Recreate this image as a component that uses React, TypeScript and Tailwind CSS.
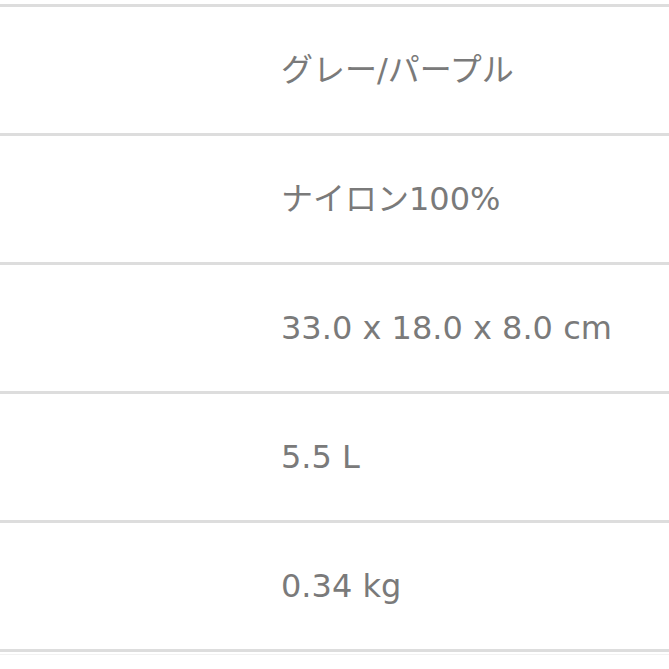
import React from 'react'

const specs = [
  { label: 'カラー', value: 'グレー/パープル' },
  { label: '素材', value: 'ナイロン100%' },
  { label: 'サイズ', value: '33.0 x 18.0 x 8.0 cm' },
  { label: '容量', value: '5.5 L' },
  { label: '重量', value: '0.34 kg' }
]

export default function App () {
  return (
    <div className="w-[669px] h-[669px] bg-white overflow-hidden pt-[4px]">
      <div className="flex flex-col">
        {specs.map((s) => (
          <div key={s.label} className="h-[129px] border-t-[3px] border-[#dddddd] flex items-center">
            <div className="w-[281px] shrink-0" aria-label={s.label} />
            <div
              className="text-[32px] leading-none text-[#7a7a7a]"
              style={{ fontFamily: '"DejaVu Sans", "Noto Sans CJK JP", sans-serif' }}
            >
              {s.value}
            </div>
          </div>
        ))}
        <div className="border-t-[3px] border-[#dddddd]" />
        <div className="mt-[2px] border-t border-[#f2f2f2]" />
      </div>
    </div>
  )
}
